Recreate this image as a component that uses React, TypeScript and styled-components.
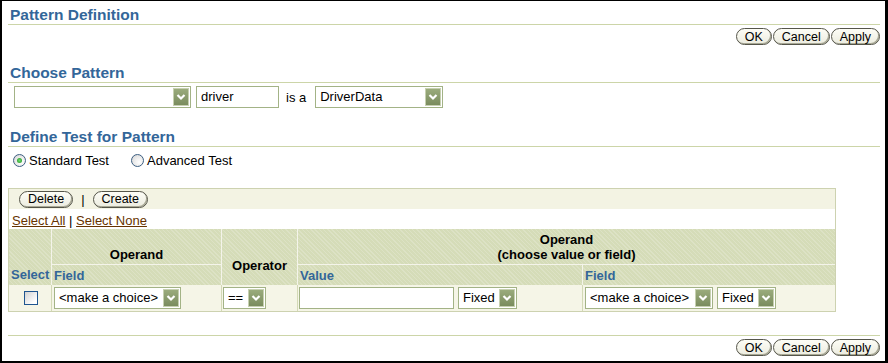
import * as React from "react";
import { FC } from "react";
import styled, { createGlobalStyle } from "styled-components";

const GlobalStyle = createGlobalStyle`
  html, body {
    margin: 0;
    padding: 0;
    background: #ffffff;
  }
  body {
    font-family: "Liberation Sans", Arial, sans-serif;
    font-size: 13px;
    color: #000000;
  }
`;

const FONT = `"Liberation Sans", Arial, sans-serif`;
const RULE = "#ccd5a8";
const BLUE = "#336699";

const Frame = styled.div`
  width: 888px;
  height: 363px;
  box-sizing: border-box;
  border-style: solid;
  border-color: #000000;
  border-width: 1px 3px 2px 2px;
  padding: 5px 5px 0 6px;
  overflow: hidden;
`;

const SectionTitle = styled.h2<{ $gap: number }>`
  margin: ${(p) => p.$gap}px 0 0;
  padding-left: 2px;
  font: bold 15.5px/18px ${FONT};
  color: ${BLUE};
  border-bottom: 1px solid ${RULE};
`;

const ButtonBar = styled.div`
  margin-top: 3px;
  display: flex;
  justify-content: flex-end;
  gap: 1px;
`;

const Btn = styled.button`
  box-sizing: border-box;
  height: 17px;
  padding: 0 8px;
  font: 12.5px/14px ${FONT};
  color: #000000;
  background: linear-gradient(#fdfdf6, #ecece0);
  border: 1px solid #55554a;
  border-radius: 9px;
  box-shadow: inset -1px -1px 0 #a8a894;
  cursor: pointer;
`;

const ChooseRow = styled.div`
  margin-top: 3px;
  padding-left: 6px;
  display: flex;
  align-items: center;
`;

const SelectBox = styled.div<{ $w: number; $ml?: number }>`
  box-sizing: border-box;
  width: ${(p) => p.$w}px;
  margin-left: ${(p) => p.$ml ?? 0}px;
  height: 22px;
  display: inline-flex;
  align-items: center;
  border: 1px solid #a3b386;
  background: #ffffff;
  padding: 0 1px 0 4px;
`;

const SelectText = styled.span`
  flex: 1;
  font: 13px/16px ${FONT};
  white-space: nowrap;
  overflow: hidden;
`;

const ArrowBtn = styled.span`
  box-sizing: border-box;
  width: 16px;
  height: 18px;
  display: inline-grid;
  place-items: center;
  background: linear-gradient(#9aab7c, #7a8c5e);
  border: 1px solid #c6d0b0;
`;

const TextBox = styled.div<{ $w: number; $ml?: number }>`
  box-sizing: border-box;
  width: ${(p) => p.$w}px;
  margin-left: ${(p) => p.$ml ?? 0}px;
  height: 22px;
  border: 1px solid #a3b386;
  background: #ffffff;
  padding: 0 4px;
  font: 13px/20px ${FONT};
`;

const Plain = styled.span<{ $ml: number }>`
  margin-left: ${(p) => p.$ml}px;
  font: 13px ${FONT};
`;

const RadioRow = styled.div`
  margin-top: 5px;
  padding-left: 5px;
  height: 16px;
  display: flex;
  align-items: center;
  gap: 22px;
`;

const RadioLabel = styled.label`
  display: inline-flex;
  align-items: center;
  gap: 3px;
  font: 13px ${FONT};
`;

const RadioDot = styled.span<{ $on?: boolean }>`
  box-sizing: border-box;
  width: 13px;
  height: 13px;
  border-radius: 50%;
  border: 1px solid #3d5f82;
  background: radial-gradient(circle at 65% 65%, #ffffff 0, #e6e6e6 60%, #cccccc 100%);
  display: inline-grid;
  place-items: center;

  &::after {
    content: "";
    display: ${(p) => (p.$on ? "block" : "none")};
    width: 5px;
    height: 5px;
    border-radius: 50%;
    background: radial-gradient(circle, #6ee06e 0, #1e8e1e 100%);
  }
`;

const TableBox = styled.div`
  margin-top: 20px;
  width: 828px;
  box-sizing: border-box;
  border: 1px solid #cdd2b0;
`;

const Toolbar = styled.div`
  height: 20px;
  background: #f3f3e3;
  display: flex;
  align-items: center;
  padding-left: 10px;
  gap: 8px;
`;

const Sep = styled.span`
  font: 13px ${FONT};
`;

const LinkRow = styled.div`
  height: 20px;
  padding-left: 3px;
  font: 13px/24px ${FONT};
  background: #ffffff;
`;

const Link = styled.a`
  color: #663300;
  text-decoration: underline;
`;

const Grid = styled.table`
  width: 826px;
  table-layout: fixed;
  border-collapse: separate;
  border-spacing: 0;
`;

const Col = styled.col<{ $w: number }>`
  width: ${(p) => p.$w}px;
`;

const HeadRow = styled.tr<{ $h: number }>`
  height: ${(p) => p.$h}px;
`;

const Th = styled.th<{ $align?: string; $blue?: boolean; $pb?: number; $last?: boolean; $sep?: boolean }>`
  padding: 0 2px ${(p) => p.$pb ?? 2}px;
  text-align: ${(p) => p.$align ?? "center"};
  vertical-align: bottom;
  font: bold 13px/15px ${FONT};
  color: ${(p) => (p.$blue ? BLUE : "#000000")};
  background-color: #d5dcb8;
  background-image: repeating-linear-gradient(
    45deg,
    rgba(255, 255, 255, 0.18) 0 1px,
    transparent 1px 3px
  );
  border-right: ${(p) => (p.$last ? "none" : "1px solid #f4f4ea")};
  border-bottom: ${(p) => (p.$sep ? "1px solid #f4f4ea" : "none")};
`;

const DataRow = styled.tr`
  height: 26px;
`;

const Td = styled.td<{ $center?: boolean; $last?: boolean; $pl?: number }>`
  padding: 0 0 0 ${(p) => p.$pl ?? 1}px;
  background: #f5f5e7;
  text-align: ${(p) => (p.$center ? "center" : "left")};
  vertical-align: middle;
  border-right: ${(p) => (p.$last ? "none" : "1px solid #d3d9b6")};
`;

const CellFlow = styled.div`
  display: flex;
  align-items: center;
`;

const CheckBox = styled.span`
  display: inline-block;
  box-sizing: border-box;
  width: 14px;
  height: 14px;
  margin-top: 3px;
  border: 1px solid #1f5590;
  background: linear-gradient(135deg, #d2d2d2, #ffffff 80%);
`;

const Divider = styled.div`
  margin-top: 23px;
  border-top: 1px solid ${RULE};
`;

const Chevron: FC = () => (
  <svg width="10" height="8" viewBox="0 0 10 8">
    <polyline points="1.5,2 5,5.5 8.5,2" fill="none" stroke="#ffffff" strokeWidth="2.2" />
  </svg>
);

const Select: FC<{ w: number; ml?: number; value?: string }> = ({ w, ml, value }) => (
  <SelectBox $w={w} $ml={ml}>
    <SelectText>{value ?? ""}</SelectText>
    <ArrowBtn>
      <Chevron />
    </ArrowBtn>
  </SelectBox>
);

const Actions: FC = () => (
  <ButtonBar>
    <Btn>OK</Btn>
    <Btn>Cancel</Btn>
    <Btn>Apply</Btn>
  </ButtonBar>
);

export default function App() {
  return (
    <>
      <GlobalStyle />
      <Frame>
        <SectionTitle $gap={0}>Pattern Definition</SectionTitle>
        <Actions />

        <SectionTitle $gap={19}>Choose Pattern</SectionTitle>
        <ChooseRow>
          <Select w={177} />
          <TextBox $w={83} $ml={5}>driver</TextBox>
          <Plain $ml={7}>is a</Plain>
          <Select w={128} ml={9} value="DriverData" />
        </ChooseRow>

        <SectionTitle $gap={20}>Define Test for Pattern</SectionTitle>
        <RadioRow>
          <RadioLabel>
            <RadioDot $on />
            Standard Test
          </RadioLabel>
          <RadioLabel>
            <RadioDot />
            Advanced Test
          </RadioLabel>
        </RadioRow>

        <TableBox>
          <Toolbar>
            <Btn>Delete</Btn>
            <Sep>|</Sep>
            <Btn>Create</Btn>
          </Toolbar>
          <LinkRow>
            <Link>Select All</Link> | <Link>Select None</Link>
          </LinkRow>
          <Grid>
            <colgroup>
              <Col $w={43} />
              <Col $w={170} />
              <Col $w={76} />
              <Col $w={285} />
              <Col $w={252} />
            </colgroup>
            <thead>
              <HeadRow $h={36}>
                <Th rowSpan={2} $blue $align="left" $pb={3}>
                  Select
                </Th>
                <Th $sep>Operand</Th>
                <Th rowSpan={2} $pb={12}>
                  Operator
                </Th>
                <Th colSpan={2} $sep $last>
                  Operand
                  <br />
                  (choose value or field)
                </Th>
              </HeadRow>
              <HeadRow $h={20}>
                <Th $blue $align="left">Field</Th>
                <Th $blue $align="left">Value</Th>
                <Th $blue $align="left" $last>
                  Field
                </Th>
              </HeadRow>
            </thead>
            <tbody>
              <DataRow>
                <Td $center>
                  <CheckBox />
                </Td>
                <Td $pl={2}>
                  <Select w={127} value="<make a choice>" />
                </Td>
                <Td>
                  <Select w={43} value="==" />
                </Td>
                <Td>
                  <CellFlow>
                    <TextBox $w={155} />
                    <Select w={59} ml={4} value="Fixed" />
                  </CellFlow>
                </Td>
                <Td $pl={2} $last>
                  <CellFlow>
                    <Select w={128} value="<make a choice>" />
                    <Select w={59} ml={4} value="Fixed" />
                  </CellFlow>
                </Td>
              </DataRow>
            </tbody>
          </Grid>
        </TableBox>

        <Divider />
        <Actions />
      </Frame>
    </>
  );
}
